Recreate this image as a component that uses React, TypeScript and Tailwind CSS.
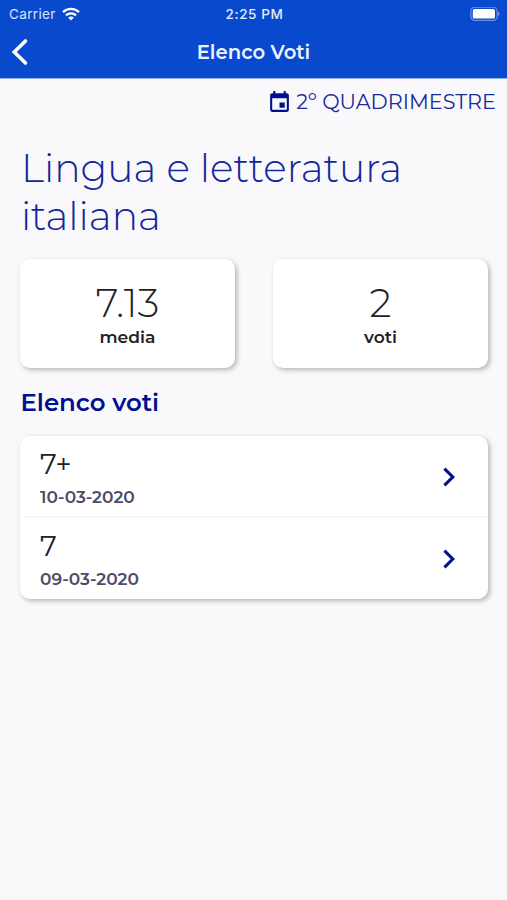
import { MdEvent } from "react-icons/md"

const stats = [
  { value: "7.13", label: "media" },
  { value: "2", label: "voti" },
]

const grades = [
  { value: "7+", date: "10-03-2020" },
  { value: "7", date: "09-03-2020" },
]

function StatusBar() {
  return (
    <div className="flex h-[27px] items-center justify-between pl-[9px] pr-[7px] font-['Inter',sans-serif]">
      <div className="flex flex-1 items-center gap-[6px]">
        <span className="pt-[2px] text-[13.5px] leading-none tracking-[0.35px] text-white/85">Carrier</span>
        <svg className="h-[14px] w-[18px]" viewBox="0 0 18 14" fill="none" stroke="white" strokeWidth="2.3">
          <path d="M1 5.1C5.4 0.8 12.6 0.8 17 5.1" />
          <path d="M4 8.3C6.8 5.6 11.2 5.6 14 8.3" />
          <path d="M9 13.6L6.2 10.7C7.8 9.2 10.2 9.2 11.8 10.7Z" fill="white" stroke="none" />
        </svg>
      </div>
      <span className="pt-[2px] text-[13.5px] font-medium leading-none tracking-[0.6px] text-white/90">2:25 PM</span>
      <div className="flex flex-1 justify-end">
        <svg className="h-[14px] w-[30px]" viewBox="0 0 30 14" fill="none">
          <rect x="0.9" y="0.2" width="26.2" height="13.2" rx="3.8" stroke="white" strokeOpacity="0.4" strokeWidth="1.2" />
          <rect x="2.8" y="2.1" width="22.2" height="9.4" rx="1.6" fill="white" />
          <path d="M28.1 4.6C30 5.3 30 8.3 28.1 9Z" fill="white" fillOpacity="0.5" />
        </svg>
      </div>
    </div>
  )
}

function Header() {
  return (
    <header className="h-[79px] border-b border-[#8fb0ea] bg-[#0849cd]">
      <StatusBar />
      <div className="grid h-[50px] grid-cols-[60px_1fr_60px] items-center">
        <button aria-label="Indietro" className="pl-[10px]">
          <svg className="h-7 w-5" viewBox="0 0 20 28" fill="none" stroke="white" strokeWidth="3.6" strokeLinecap="round" strokeLinejoin="miter">
            <path d="M15.5 3L4.3 14L15.5 25" />
          </svg>
        </button>
        <h1 className="pt-[2px] text-center text-[19.6px] font-semibold leading-none text-[#eef3ff]">Elenco Voti</h1>
      </div>
    </header>
  )
}

function ChevronRight() {
  return (
    <svg className="h-5 w-3" viewBox="0 0 12 20" fill="none" stroke="#00118f" strokeWidth="3.1">
      <path d="M1.4 1.6L9.8 10L1.4 18.4" />
    </svg>
  )
}

export default function App() {
  return (
    <div className="h-[900px] w-[507px] overflow-hidden bg-[#f9f9fc] font-['Montserrat','Inter',sans-serif]">
      <Header />

      <div className="flex h-[46px] items-center justify-end gap-[4px] pr-[11px] text-[#1a2b9c]">
        <MdEvent className="size-[25px] text-[#00118f]" />
        <span className="pt-px text-[20.75px] leading-none">2º QUADRIMESTRE</span>
      </div>

      <main className="pl-5 pr-[19px]">
        <h2 className="pl-px pt-[20px] text-[39.2px] font-light leading-[47.5px] text-[#13269b]">
          Lingua e letteratura
          <br />
          italiana
        </h2>

        <div className="mt-[19px] flex gap-[38px]">
          {stats.map((stat) => (
            <div
              key={stat.label}
              className="flex h-[108.5px] flex-1 flex-col items-center rounded-[10px] bg-white pt-[24px] text-[#222226] shadow-[2px_2px_5px_rgba(0,0,0,0.28)]"
            >
              <span className="text-[39px] font-light leading-[40px]">{stat.value}</span>
              <span className="mt-[4px] text-[17.2px] font-semibold leading-[20px]">{stat.label}</span>
            </div>
          ))}
        </div>

        <h3 className="mt-[18px] pl-[0.5px] text-[24.4px] font-semibold leading-[32px] text-[#00118f]">Elenco voti</h3>

        <div className="mt-[18px] rounded-[10px] bg-white shadow-[2px_2px_5px_rgba(0,0,0,0.28)]">
          {grades.map((grade, i) => (
            <div key={grade.date} className={i > 0 ? "ml-[4px] border-t-2 border-[#f6f6f7]" : "ml-[4px]"}>
              <div className={`flex items-center justify-between pl-[16px] pr-[33px] ${i > 0 ? "h-[81.5px] pt-px" : "h-[80px] pt-[3px]"}`}>
                <div>
                  <div className="text-[28.5px] leading-[34px] text-[#222226]">{grade.value}</div>
                  <div className="mt-[6px] text-[17px] font-semibold leading-[20px] text-[#504b68]">{grade.date}</div>
                </div>
                <ChevronRight />
              </div>
            </div>
          ))}
        </div>
      </main>
    </div>
  )
}
